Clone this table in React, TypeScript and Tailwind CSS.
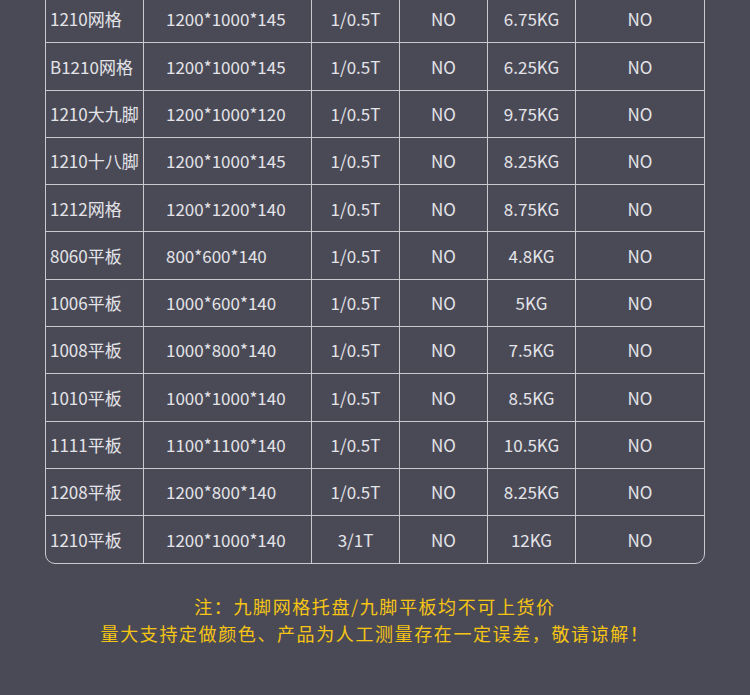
const rows: [string, string, string, string, string, string][] = [
  ["1210网格", "1200*1000*145", "1/0.5T", "NO", "6.75KG", "NO"],
  ["B1210网格", "1200*1000*145", "1/0.5T", "NO", "6.25KG", "NO"],
  ["1210大九脚", "1200*1000*120", "1/0.5T", "NO", "9.75KG", "NO"],
  ["1210十八脚", "1200*1000*145", "1/0.5T", "NO", "8.25KG", "NO"],
  ["1212网格", "1200*1200*140", "1/0.5T", "NO", "8.75KG", "NO"],
  ["8060平板", "800*600*140", "1/0.5T", "NO", "4.8KG", "NO"],
  ["1006平板", "1000*600*140", "1/0.5T", "NO", "5KG", "NO"],
  ["1008平板", "1000*800*140", "1/0.5T", "NO", "7.5KG", "NO"],
  ["1010平板", "1000*1000*140", "1/0.5T", "NO", "8.5KG", "NO"],
  ["1111平板", "1100*1100*140", "1/0.5T", "NO", "10.5KG", "NO"],
  ["1208平板", "1200*800*140", "1/0.5T", "NO", "8.25KG", "NO"],
  ["1210平板", "1200*1000*140", "3/1T", "NO", "12KG", "NO"],
];

export default function App() {
  return (
    <div
      className="w-[750px] h-[695px] overflow-hidden bg-[#4a4a57]"
      style={{ fontFamily: '"Noto Sans CJK SC", "Noto Sans", sans-serif' }}
    >
      <div className="mx-[45px] mt-[-6px] w-[660px] border border-[#c9c9cf] rounded-b-[10px] overflow-hidden">
        {rows.map((r, i) => (
          <div
            key={i}
            className={`grid grid-cols-[97px_168px_88px_88px_88px_1fr] h-[47.3px] text-[17px] text-[#e4e4e8] ${
              i > 0 ? "border-t border-[#c9c9cf]" : ""
            }`}
          >
            <div className="flex items-center pl-[4px] whitespace-nowrap">{r[0]}</div>
            <div className="flex items-center pl-[22px] border-l border-[#c9c9cf]">{r[1]}</div>
            <div className="flex items-center justify-center border-l border-[#c9c9cf]">{r[2]}</div>
            <div className="flex items-center justify-center border-l border-[#c9c9cf]">{r[3]}</div>
            <div className="flex items-center justify-center border-l border-[#c9c9cf]">{r[4]}</div>
            <div className="flex items-center justify-center border-l border-[#c9c9cf]">{r[5]}</div>
          </div>
        ))}
      </div>
      <div className="mt-[29px] text-center text-[18px] leading-[27px] tracking-[1.6px] text-[#f6c514] [text-spacing-trim:space-all]">
        <p>注：九脚网格托盘/九脚平板均不可上货价</p>
        <p>量大支持定做颜色、产品为人工测量存在一定误差，敬请谅解！</p>
      </div>
    </div>
  );
}
